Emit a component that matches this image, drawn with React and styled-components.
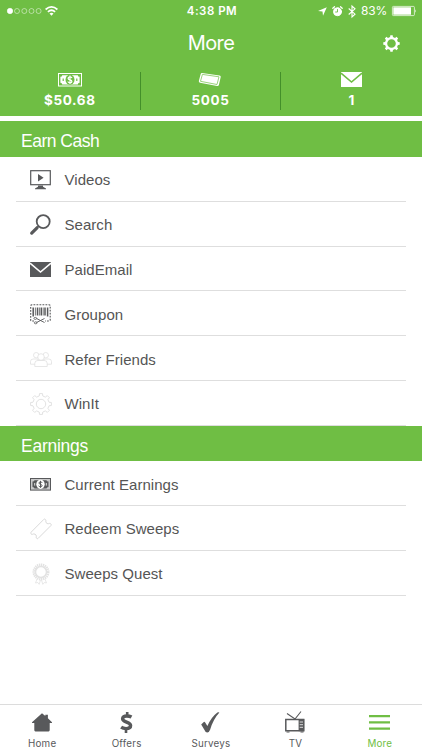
import React from "react";
import styled, { createGlobalStyle } from "styled-components";

const GREEN = "#6fbe44";
const DARK = "#58595b";

const Global = createGlobalStyle`
  * { box-sizing: border-box; }
  body { margin: 0; background: #fff; font-family: Inter, "Liberation Sans", sans-serif; color: #555; }
  svg { display: block; flex: none; overflow: visible; }
`;

const Screen = styled.div`
  width: 422px;
  height: 750px;
  display: flex;
  flex-direction: column;
  overflow: hidden;
  background: #fff;
`;
const Header = styled.header`
  height: 116px;
  flex: none;
  background: ${GREEN};
  color: #fff;
`;
const StatusBar = styled.div`
  height: 22px;
  display: grid;
  grid-template-columns: 1fr auto 1fr;
  align-items: center;
  padding: 0 5px 0 7px;
`;
const StatusGroup = styled.div`
  display: flex;
  align-items: center;
  justify-content: ${(p) => (p.$end ? "flex-end" : "flex-start")};
  gap: ${(p) => p.$gap}px;
`;
const Time = styled.span`
  font-size: 11.5px;
  line-height: 22px;
  font-weight: 600;
  letter-spacing: 0.5px;
`;
const Percent = styled.span`
  font-size: 12px;
  line-height: 22px;
  letter-spacing: -0.2px;
`;
const TitleBar = styled.div`
  height: 42px;
  display: grid;
  grid-template-columns: 1fr auto 1fr;
  align-items: center;
  padding-right: 22px;
`;
const Title = styled.h1`
  grid-column: 2;
  margin: 0 0 1px 22px;
  font-size: 20px;
  line-height: 24px;
  font-weight: 400;
  letter-spacing: -0.55px;
`;
const SettingsButton = styled.button`
  justify-self: end;
  padding: 1px 0 0;
  border: 0;
  background: none;
  color: #fff;
`;
const Stats = styled.div`
  display: grid;
  grid-template-columns: repeat(3, 1fr);
  padding-top: 8px;
`;
const Stat = styled.div`
  height: 38px;
  display: flex;
  flex-direction: column;
  align-items: center;
  border-right: ${(p) => (p.$last ? "0" : "1px solid #438f2a")};
`;
const StatIcon = styled.div`
  height: 20px;
  display: flex;
  align-items: flex-start;
`;
const StatValue = styled.span`
  font-size: 13.5px;
  line-height: 20px;
  font-weight: 700;
  letter-spacing: 0.6px;
`;
const Main = styled.main`
  flex: 1;
  padding-top: 5px;
`;
const SectionTitle = styled.h2`
  height: ${(p) => p.$height}px;
  margin: 0;
  padding: 3px 0 0 21px;
  background: ${GREEN};
  color: #fff;
  font-family: "Liberation Sans", Arial, sans-serif;
  font-size: 17.5px;
  line-height: 35px;
  font-weight: 400;
  letter-spacing: ${(p) => p.$spacing || 0}px;
`;
const Row = styled.div`
  height: 44.8px;
  margin-left: 16px;
  width: 390px;
  display: flex;
  align-items: center;
  padding-top: 2px;
  border-bottom: 1px solid #dedede;
`;
const RowIcon = styled.span`
  width: 48.5px;
  display: flex;
  justify-content: center;
  padding-left: 1px;
`;
const RowLabel = styled.span`
  font-family: "Liberation Sans", Arial, sans-serif;
  font-size: 15px;
  line-height: 20px;
  letter-spacing: 0.04px;
  padding-top: 1px;
`;
const TabBar = styled.nav`
  height: 46px;
  flex: none;
  display: grid;
  grid-template-columns: repeat(5, 1fr);
  border-top: 1px solid #dcdcdc;
`;
const Tab = styled.a`
  display: flex;
  flex-direction: column;
  align-items: center;
  padding-top: 5px;
  color: ${(p) => (p.$active ? GREEN : DARK)};
`;
const TabIcon = styled.span`
  height: 26px;
  display: flex;
  align-items: center;
  padding-bottom: 2px;
`;
const TabLabel = styled.span`
  font-size: 9.8px;
  line-height: 15px;
  letter-spacing: 0.2px;
`;

const gearPath = (teeth, outer, inner, c) => {
  const pts = [];
  const step = (Math.PI * 2) / teeth;
  [...Array(teeth)].forEach((_, i) => {
    const a = i * step - Math.PI / 2;
    [[-0.28, inner], [-0.18, outer], [0.18, outer], [0.28, inner]].forEach(([o, r]) => {
      pts.push(`${(c + Math.cos(a + o * step) * r).toFixed(2)} ${(c + Math.sin(a + o * step) * r).toFixed(2)}`);
    });
  });
  return `M${pts.join("L")}Z`;
};

const Signal = () => (
  <svg width="35" height="6" viewBox="0 0 35 6" fill="none" stroke="#fff" strokeWidth=".6">
    <circle cx="3" cy="3" r="2.7" fill="#fff" />
    {[10, 17.3, 24.5, 31.6].map((x) => <circle key={x} cx={x} cy="3" r="2.5" opacity=".8" />)}
  </svg>
);
const Wifi = () => (
  <svg width="13" height="10" viewBox="0 0 13 10" fill="none" stroke="#fff" strokeWidth="1.7">
    <path d="M.6 3.5Q6.5-1.7 12.4 3.5M2.9 5.9Q6.5 2.6 10.1 5.9" />
    <path d="M4.5 7.6Q6.5 5.9 8.5 7.6L6.5 9.7Z" fill="#fff" stroke="none" />
  </svg>
);
const Arrow = () => (
  <svg width="9" height="9" viewBox="0 0 9 9"><path d="M8.8.2 5 8.8 4.5 4.5 0 4.1Z" fill="#fff" /></svg>
);
const Alarm = () => (
  <svg width="11" height="11" viewBox="0 0 11 11" fill="none" stroke="#fff" strokeLinecap="round">
    <circle cx="5.5" cy="5.7" r="4" fill="#fff" />
    <path d="M.8 2.3 2.5.8M8.5.8l1.7 1.5" strokeWidth="1.3" />
    <path d="M5.5 3.5V6H3.6" stroke={GREEN} strokeWidth=".9" />
  </svg>
);
const Bluetooth = () => (
  <svg width="8" height="13" viewBox="0 0 8 13" fill="none" stroke="#fff" strokeWidth="1.1">
    <path d="M.7 3.5 7 9.2 4 12V1l3 2.8L.7 9.5" />
  </svg>
);
const Battery = () => (
  <svg width="25" height="10" viewBox="0 0 25 10">
    <rect x=".4" y=".4" width="22" height="9.2" rx="1" fill="none" stroke="#fff" strokeWidth=".7" />
    <rect x="1.3" y="1.3" width="17.7" height="7.4" fill="#fff" />
    <path d="M23.4 3.2q1.4 1.8 0 3.6Z" fill="#fff" />
  </svg>
);
const Settings = () => (
  <svg width="17" height="17" viewBox="0 0 17 17">
    <path fill="currentColor" fillRule="evenodd" d={gearPath(8, 8.3, 6.6, 8.5) + "M8.5 4.2a4.3 4.3 0 1 0 0 8.6a4.3 4.3 0 0 0 0-8.6Z"} />
  </svg>
);
const HeaderBill = () => (
  <svg width="24" height="15" viewBox="0 0 24 15">
    <rect x=".5" y="1.5" width="23" height="12.5" fill="none" stroke="#fff" />
    <path d="M4.2 3.2h15.6q0 1.6 1.8 1.6v6q-1.8 0-1.8 1.6H4.2q0-1.6-1.8-1.6v-6q1.8 0 1.8-1.6Z" fill="#fff" />
    <ellipse cx="12" cy="7.8" rx="4.5" ry="5" fill={GREEN} />
    <path d="M14 6Q13.5 4.8 12 4.8t-1.9 1.4q0 1.2 1.9 1.6t1.9 1.6q0 1.4-1.9 1.4T9.9 9.5M12 3.6V12" fill="none" stroke="#fff" strokeWidth="1.2" />
    <path d="M5.2 6.5v2.6M18.8 6.5v2.6" stroke={GREEN} strokeWidth="1.2" />
  </svg>
);
const Bill = () => (
  <svg width="21" height="13" viewBox="0 0 21 13">
    <rect x=".5" y=".5" width="20" height="11.6" fill="#c9c9ca" stroke={DARK} />
    <path d="M4.5 2.2h12q.2 1.2 2 1.4V9q-1.8.2-2 1.4h-12Q4.300 9.200 2.500 9V3.600Q4.300 3.400 4.500 2.200Z" fill={DARK} />
    <ellipse cx="10.500" cy="6.300" rx="4.200" ry="4.600" fill="#fff" />
    <path d="M12.200 4.900Q11.900 3.900 10.500 3.900T8.900 5q0 .9 1.600 1.300t1.600 1.400q0 1.100-1.600 1.100T8.700 7.700M10.500 2.800v7" fill="none" stroke={DARK} strokeWidth="1" />
    <path d="M4.700 5v2.600M16.300 5v2.600" stroke="#ddd" strokeWidth="1" />
  </svg>
);
const SwagTicket = () => (
  <svg width="24" height="16" viewBox="0 0 24 16">
    <path d="M4 1 21.500 3.400q1.500.3 1.200 1.700L20.900 12.900q-.4 1.300-1.800 1.100L2 10.700Q.4 10.300.9 8.700L2.700 2Q3 .9 4 1Z" fill="#fff" />
    <path d="M4.400 2.400 21 4.800l-2 7.700L2.500 9.300Z" fill="none" stroke={GREEN} strokeWidth=".7" />
  </svg>
);
const Mail = ({ color, gap, h }) => (
  <svg width="21" height={h} viewBox="0 0 21 15" preserveAspectRatio="none">
    <path d="M0 0h21v15H0Z" fill={color} />
    <path d="M0 1.2 10.5 10 21 1.2" fill="none" stroke={gap} strokeWidth="1.6" />
  </svg>
);
const Monitor = () => (
  <svg width="21" height="20" viewBox="0 0 21 20">
    <rect x=".7" y=".7" width="19.6" height="14" fill="none" stroke={DARK} strokeWidth="1.2" />
    <path d="M8 4v7.4l5.6-3.700ZM8 15.500h5v1.200l3 1.800v.8H5v-.8l3-1.800Z" fill={DARK} />
  </svg>
);
const Magnifier = () => (
  <svg width="21" height="21" viewBox="0 0 21 21" fill="none" stroke={DARK}>
    <circle cx="13.2" cy="7.6" r="6.5" strokeWidth="1.8" />
    <path d="m8.6 12.2-1.7 1.7" strokeWidth="1.6" />
    <path d="m7 13.800-5.300 5.300" strokeWidth="3.2" strokeLinecap="round" />
  </svg>
);
const Coupon = () => (
  <svg width="21" height="21" viewBox="0 0 21 21" fill="none" stroke={DARK}>
    <path d="M4 17H1.6Q.7 17 .7 16V2Q.7.8 2 .8h17q1.200 0 1.200 1.200v14q0 1-1 1H15" strokeWidth="1.1" strokeDasharray="1.8 1.2" />
    <path d="M3.2 3.500v9M7.500 3.500v8M11.300 3.500v8M15 3.500v8M17.600 3.500v9" strokeWidth="1.5" />
    <path d="M5.4 3.500v8M9.400 3.500v8M13.200 3.500v8" strokeWidth=".8" />
    <path d="m6.500 14.500 8 4M6.500 18.500 14.500 14.500" strokeWidth=".9" />
    <ellipse cx="5.3" cy="14.4" rx="1.4" ry="1" strokeWidth=".8" />
    <ellipse cx="5.7" cy="18.8" rx="1.4" ry="1" strokeWidth=".8" />
  </svg>
);
const Friends = () => (
  <svg width="22" height="15" viewBox="0 0 22 15" fill="#fff" stroke="#dcdcdc" strokeWidth=".7">
    <circle cx="6.2" cy="3.2" r="2.7" /><circle cx="15.8" cy="3.2" r="2.7" />
    <path d="M.5 12.2V9.500Q.5 7 3.300 7H8v5.200ZM21.500 12.200V9.500Q21.500 7 18.700 7H14v5.200Z" />
    <path d="M4.800 14.500v-3.200q0-2.800 3-2.800h6.400q3 0 3 2.800v3.200Z" /><circle cx="11" cy="5" r="3.3" />
  </svg>
);
const Cog = () => (
  <svg width="22" height="22" viewBox="0 0 22 22" fill="none" stroke="#dadada" strokeWidth=".8" strokeLinejoin="round">
    <path d={gearPath(8, 10.5, 8.2, 11)} /><circle cx="11" cy="11" r="4.7" />
  </svg>
);
const Ticket = () => (
  <svg width="22" height="22" viewBox="0 0 22 22" fill="none" stroke="#cfcfcf" strokeWidth=".8" strokeLinejoin="round">
    <path d="M13.800 1.400q.9-.9 1.700.2.6.800.3 1.600-.2 1.700 1.400 2.300 1.300.5 2.300-.1.700-.300 1.400.6.700.800 0 1.600L8.200 20.300q-.9.900-1.700-.1-.5-.700-.2-1.500.3-1.800-1.300-2.500-1.400-.6-2.500.1-.9.400-1.500-.5-.6-.8.100-1.600Z" />
  </svg>
);
const Rosette = () => (
  <svg width="18" height="22" viewBox="0 0 18 22" fill="none" stroke="#e2e2e2">
    <circle cx="9" cy="9" r="7.1" strokeWidth="2.800" strokeDasharray="1.3 .65" />
    <circle cx="9" cy="9" r="5.5" strokeWidth="1.5" />
    <path d="m5 16-1.500 4 2.300-.5 1.400 1.800L8.500 17M13 16l1.500 4-2.300-.5-1.400 1.800L9.500 17" strokeWidth=".8" />
  </svg>
);
const Home = () => (
  <svg width="20" height="19" viewBox="0 0 20 19" fill={DARK}>
    <path d="M10 .2 13.300 3V1.800h2.600v3.500L20 9.200v.7h-2.300v7.200q0 1.300-1.100 1.300H3.400q-1.100 0-1.100-1.300V9.900H0v-.7Z" />
  </svg>
);
const Dollar = () => (
  <svg width="13" height="21" viewBox="0 0 13 21" fill="none" stroke={DARK}>
    <path d="M11.500 5.100Q9.500 4 6.800 4 2.600 4 2.600 6.700c0 3.900 8 2.900 8 6.900 0 2.100-2 3-4.500 3q-3 0-5-1.400" strokeWidth="3.4" />
    <path d="M7.200 0v4M6 17v4" strokeWidth="2.6" />
  </svg>
);
const Check = () => (
  <svg width="19" height="21" viewBox="0 0 19 21"><path fill={DARK} d="M.2 12.500 2.800 10q.7-.5 1.200.3L6.400 14Q10.200 5.100 16.400.500q.9-.5 2 .1-6 6.400-9.300 17.200Q8 20.600 6.300 20.600c-1.300 0-2-.7-2.500-2Z" /></svg>
);
const Television = () => (
  <svg width="20" height="22" viewBox="0 0 20 22" fill="none" stroke={DARK}>
    <path d="M2 2.500 10 8l6-7.500" strokeWidth="1.1" />
    <path d="M.8 8.600h17.900v11.200H.8Z" strokeWidth="1.5" />
    <path d="M13.600 8h5.600v12.200h-5.600Z" fill={DARK} stroke="none" />
    <path d="M14.700 11h3.300M14.700 13.700h3.300M14.700 16.300h3.300" stroke="#fff" strokeWidth=".8" />
    <path d="M1.500 21h3M15.500 21h3" strokeWidth="1" />
  </svg>
);
const Menu = () => (
  <svg width="21" height="15" viewBox="0 0 21 15"><path d="M0 1.2h21M0 7.400h21M0 13.600h21" stroke={GREEN} strokeWidth="2.2" /></svg>
);

const sections = [
  { title: "Earn Cash", height: 36, spacing: -0.5, rows: [["Videos", Monitor], ["Search", Magnifier], ["PaidEmail", () => <Mail color={DARK} gap="#fff" h={15} />], ["Groupon", Coupon], ["Refer Friends", Friends], ["WinIt", Cog]] },
  { title: "Earnings", height: 35.5, spacing: -0.25, rows: [["Current Earnings", Bill], ["Redeem Sweeps", Ticket], ["Sweeps Quest", Rosette]] },
];
const tabs = [["Home", Home], ["Offers", Dollar], ["Surveys", Check], ["TV", Television], ["More", Menu]];

export default function App() {
  return (
    <Screen>
      <Global />
      <Header>
        <StatusBar>
          <StatusGroup $gap={3}><Signal /><Wifi /></StatusGroup>
          <Time>4:38 PM</Time>
          <StatusGroup $end $gap={5}><Arrow /><Alarm /><Bluetooth /><Percent>83%</Percent><Battery /></StatusGroup>
        </StatusBar>
        <TitleBar>
          <Title>More</Title>
          <SettingsButton aria-label="Settings"><Settings /></SettingsButton>
        </TitleBar>
        <Stats>
          <Stat><StatIcon><HeaderBill /></StatIcon><StatValue>$50.68</StatValue></Stat>
          <Stat><StatIcon><SwagTicket /></StatIcon><StatValue>5005</StatValue></Stat>
          <Stat $last><StatIcon><Mail color="#fff" gap={GREEN} h={15} /></StatIcon><StatValue>1</StatValue></Stat>
        </Stats>
      </Header>
      <Main>
        {sections.map((s) => (
          <section key={s.title}>
            <SectionTitle $height={s.height} $spacing={s.spacing}>{s.title}</SectionTitle>
            {s.rows.map(([label, Icon]) => (
              <Row key={label}><RowIcon><Icon /></RowIcon><RowLabel>{label}</RowLabel></Row>
            ))}
          </section>
        ))}
      </Main>
      <TabBar>
        {tabs.map(([label, Icon]) => (
          <Tab key={label} $active={label === "More"}><TabIcon><Icon /></TabIcon><TabLabel>{label}</TabLabel></Tab>
        ))}
      </TabBar>
    </Screen>
  );
}
